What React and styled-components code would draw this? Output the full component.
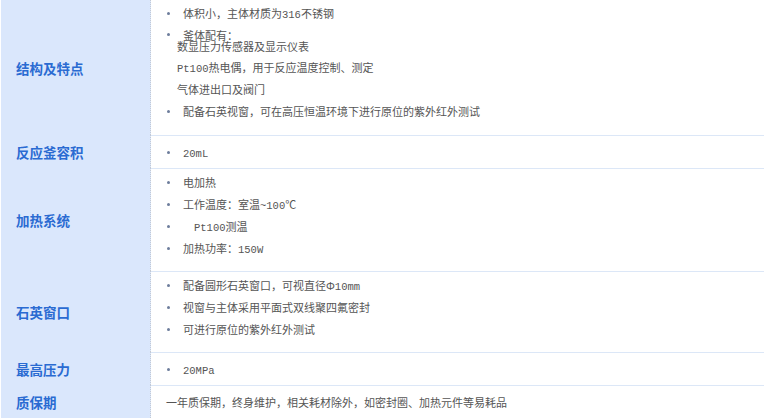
import React from "react";
import styled, { createGlobalStyle } from "styled-components";

const rows = [
  {
    label: "结构及特点",
    pb: 13,
    lines: [
      { b: true, t: "体积小，主体材质为316不锈钢" },
      { b: true, t: "釜体配有：", sub: "数显压力传感器及显示仪表" },
      { t: "Pt100热电偶，用于反应温度控制、测定" },
      { t: "气体进出口及阀门" },
      { b: true, t: "配备石英视窗，可在高压恒温环境下进行原位的紫外红外测试" },
    ],
  },
  { label: "反应釜容积", single: true, lines: [{ b: true, t: "20mL" }] },
  {
    label: "加热系统",
    pb: 12,
    lines: [
      { b: true, t: "电加热" },
      { b: true, t: "工作温度：室温~100℃" },
      { b: true, t: "Pt100测温", indent: 11 },
      { b: true, t: "加热功率：150W" },
    ],
  },
  {
    label: "石英窗口",
    pb: 12,
    lines: [
      { b: true, t: "配备圆形石英窗口，可视直径Φ10mm" },
      { b: true, t: "视窗与主体采用平面式双线聚四氟密封" },
      { b: true, t: "可进行原位的紫外红外测试" },
    ],
  },
  { label: "最高压力", single: true, lines: [{ b: true, t: "20MPa" }] },
  {
    label: "质保期",
    single: true,
    lines: [{ t: "一年质保期，终身维护，相关耗材除外，如密封圈、加热元件等易耗品", left: 15 }],
  },
];

const GlobalStyle = createGlobalStyle`
  body {
    margin: 0;
    background: #fff;
    font-family: "Noto Sans CJK SC", sans-serif;
  }
`;

const Table = styled.div`
  width: 763px;
  margin-left: 1px;
  overflow: hidden;
`;

const Row = styled.div`
  display: grid;
  grid-template-columns: 150px 1fr;
`;

const Label = styled.div`
  background: #dae7fc;
  border-right: 1px dotted #c4cad4;
  display: flex;
  align-items: center;
  padding-left: 15px;
  font-size: 13.5px;
  font-weight: 700;
  color: #2a6bd2;
`;

const Cell = styled.div`
  border-top: ${({ $first }) => ($first ? "none" : "1px solid #dce7f7")};
  padding: ${({ $single, $pb }) => ($single ? "5px 0" : `2px 0 ${$pb}px`)};
`;

const Line = styled.div`
  display: flex;
  align-items: center;
  height: ${({ $h }) => $h || 22}px;
  padding-left: ${({ $left }) => $left}px;
  font-size: 11px;
  color: #555;
  white-space: nowrap;
`;

/* second line of a bullet, tucked right under the first one */
const SubLine = styled(Line)`
  margin-top: -10px;
  padding-left: 26px;
`;

const Bullet = styled.span`
  width: 3px;
  height: 3px;
  border-radius: 50%;
  background: #6d7d9c;
  margin-right: 13px;
  flex: none;
`;

const Text = styled.span`
  padding-left: ${({ $indent }) => $indent || 0}px;
`;

const Mono = styled.span`
  font-family: "Liberation Mono", monospace;
  font-size: 10.5px;
`;

const fmt = (s) =>
  s.split(/([A-Za-z0-9.~]+)/).map((p, i) =>
    /^[A-Za-z0-9.~]+$/.test(p) ? <Mono key={i}>{p}</Mono> : p
  );

export default function App() {
  return (
    <>
      <GlobalStyle />
      <Table>
        {rows.map((r, i) => (
          <Row key={r.label}>
            <Label>{r.label}</Label>
            <Cell $first={i === 0} $single={r.single} $pb={r.pb}>
              {r.lines.map((l, j) => (
                <React.Fragment key={j}>
                  <Line $left={l.b ? 16 : l.left || 26} $h={l.sub ? 21 : 22}>
                    {l.b && <Bullet />}
                    <Text $indent={l.indent}>{fmt(l.t)}</Text>
                  </Line>
                  {l.sub && <SubLine $h={21}>{fmt(l.sub)}</SubLine>}
                </React.Fragment>
              ))}
            </Cell>
          </Row>
        ))}
      </Table>
    </>
  );
}
